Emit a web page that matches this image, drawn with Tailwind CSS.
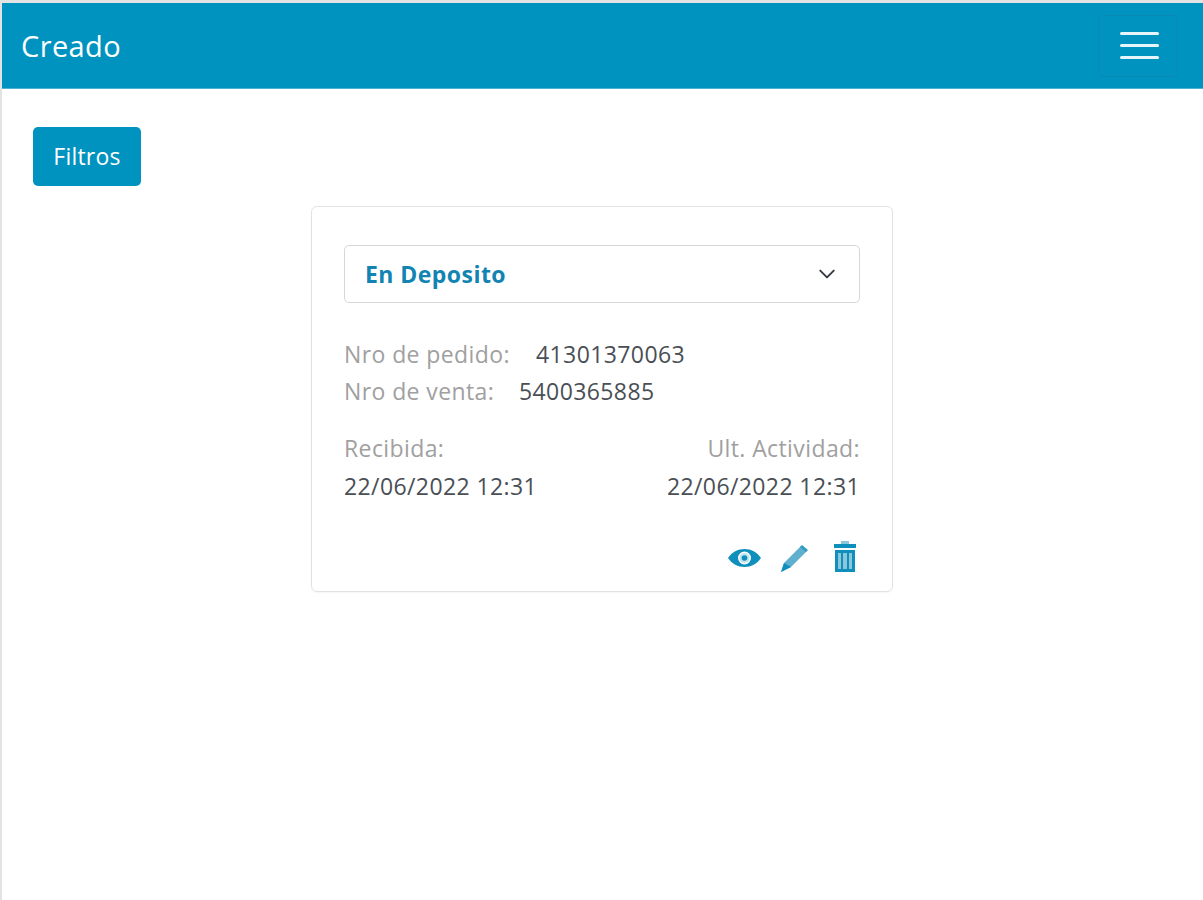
<!DOCTYPE html>
<html lang="es">
<head>
    <meta charset="UTF-8">
    <title>Creado</title>
    <script src="https://cdn.jsdelivr.net/npm/@tailwindcss/browser@4"></script>
</head>
<body class="bg-white h-[900px] overflow-hidden border-t-[3px] border-l-[2px] border-[#e3e3e3] font-['Open_Sans',sans-serif]">
    <!-- navbar -->
    <nav class="h-[86px] bg-[#0093c0] flex items-center justify-between pl-[19px] pr-[25px] border-b border-[#4db3d3]">
        <span class="text-white text-[29px] tracking-[0.4px] mt-[1px]">Creado</span>
        <button class="w-[80px] h-[62px] pl-[2px] border border-[#0a8ab3] rounded flex flex-col items-center justify-center gap-[9px]">
            <span class="block w-[39px] h-[3px] rounded bg-[#e4f6fb]"></span>
            <span class="block w-[39px] h-[3px] rounded bg-[#e4f6fb]"></span>
            <span class="block w-[39px] h-[3px] rounded bg-[#e4f6fb]"></span>
        </button>
    </nav>

    <div class="pl-[31px] pt-[38px]">
        <button class="w-[108px] h-[59px] bg-[#0093c0] rounded-[5px] text-white text-[23px] tracking-[0.2px] pb-[1px]">Filtros</button>
    </div>

    <!-- pedido card -->
    <div class="w-[582px] h-[386px] ml-[309px] mt-[20px] border border-[#e2e2e2] rounded-[6px] pt-[38px] px-[32px] shadow-[0_1px_2px_rgba(0,0,0,0.04)]">
        <div class="h-[58px] border border-[#d4d7da] rounded-[5px] flex items-center justify-between pl-[20px] pr-[23px]">
            <span class="text-[23px] font-bold tracking-[0.45px] text-[#1184b4]">En Deposito</span>
            <svg class="w-[18px] h-[18px]" viewBox="0 0 16 16" fill="none" stroke="#343a40" stroke-width="1.700" stroke-linecap="round" stroke-linejoin="round"><path d="M2 5l6 6 6-6"/></svg>
        </div>

        <div class="mt-[33px] text-[23px] leading-[37px] tracking-[0.4px]">
            <div class="flex">
                <span class="text-[#a0a0a0] w-[192px]">Nro de pedido:</span>
                <span class="text-[#4a4f55]">41301370063</span>
            </div>
            <div class="flex">
                <span class="text-[#a0a0a0] w-[175px]">Nro de venta:</span>
                <span class="text-[#4a4f55]">5400365885</span>
            </div>
        </div>

        <div class="mt-[19px] flex justify-between text-[23px] leading-[38px] tracking-[0.4px]">
            <div>
                <div class="text-[#a0a0a0]">Recibida:</div>
                <div class="text-[#4a4f55]">22/06/2022 12:31</div>
            </div>
            <div class="text-right">
                <div class="text-[#a0a0a0]">Ult. Actividad:</div>
                <div class="text-[#4a4f55]">22/06/2022 12:31</div>
            </div>
        </div>

        <div class="mt-[36px] flex justify-end items-start gap-[19px] pr-[4px]">
            <!-- ver -->
            <svg class="w-[33px] h-[18px] mt-[8px]" viewBox="0 0 33 18"><path fill="#0f8fbb" fill-rule="evenodd" d="M0 9C4 3 10 0 16.500 0S29 3 33 9c-4 6-10 9-16.500 9S4 15 0 9zm16.500-6.500a6.500 6.500 0 1 0 0 13 6.500 6.500 0 0 0 0-13z"/><circle cx="16.500" cy="9" r="5" fill="#bfe3ef"/><circle cx="16.500" cy="9" r="2.800" fill="#0f8fbb"/></svg>
            <!-- editar -->
            <svg class="w-[28px] h-[27px] mt-[4px] mr-[7px]" viewBox="0 0 28 27"><path fill="#5fb0cf" d="M21 1l6 5L11 22l-10 5 3-9z"/><path fill="#2f9cc3" d="M20 2l2-2 6 5-2 2z"/><path fill="#0f8fbb" d="M4 18l7 4-10 5z"/></svg>
            <!-- borrar -->
            <svg class="w-[22px] h-[31px]" viewBox="0 0 22 31"><path fill="#8cc6dc" d="M7 0h8v3H7z"/><path fill="#0f8fbb" d="M0 3h22v4H0z"/><path fill="#0f8fbb" fill-rule="evenodd" d="M1 9h20v22H1zm3 3v16h3V12zm5.500 0v16h3V12zM15 12v16h3V12z"/><path fill="#8cc6dc" d="M4 12h3v16H4zM9.500 12h3v16h-3zM15 12h3v16h-3z"/></svg>
        </div>
    </div>
</body>
</html>
